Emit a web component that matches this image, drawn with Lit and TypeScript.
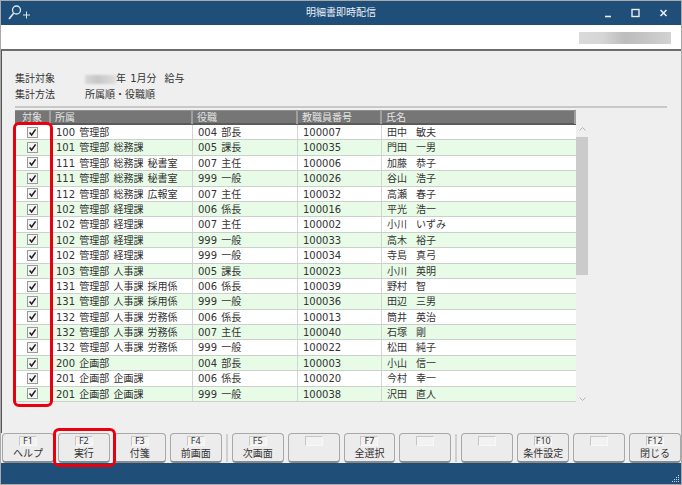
import { LitElement, html, css, nothing } from 'lit';
import { customElement } from 'lit/decorators.js';

const ROWS: string[][] = [
  ['100 管理部', '004 部長', '100007', '田中', '敏夫'],
  ['101 管理部 総務課', '005 課長', '100035', '門田', '一男'],
  ['111 管理部 総務課 秘書室', '007 主任', '100006', '加藤', '恭子'],
  ['111 管理部 総務課 秘書室', '999 一般', '100026', '谷山', '浩子'],
  ['112 管理部 総務課 広報室', '007 主任', '100032', '高瀬', '春子'],
  ['102 管理部 経理課', '006 係長', '100016', '平光', '浩一'],
  ['102 管理部 経理課', '007 主任', '100002', '小川', 'いずみ'],
  ['102 管理部 経理課', '999 一般', '100033', '高木', '裕子'],
  ['102 管理部 経理課', '999 一般', '100034', '寺島', '真弓'],
  ['103 管理部 人事課', '005 課長', '100023', '小川', '英明'],
  ['131 管理部 人事課 採用係', '006 係長', '100039', '野村', '智'],
  ['131 管理部 人事課 採用係', '999 一般', '100036', '田辺', '三男'],
  ['132 管理部 人事課 労務係', '006 係長', '100013', '筒井', '英治'],
  ['132 管理部 人事課 労務係', '007 主任', '100040', '石塚', '剛'],
  ['132 管理部 人事課 労務係', '999 一般', '100022', '松田', '純子'],
  ['200 企画部', '004 部長', '100003', '小山', '信一'],
  ['201 企画部 企画課', '006 係長', '100020', '今村', '幸一'],
  ['201 企画部 企画課', '999 一般', '100038', '沢田', '直人'],
];

// null = separator between button groups
const KEYS: ([string, string] | null)[] = [
  ['F1', 'ヘルプ'],
  ['F2', '実行'],
  ['F3', '付箋'],
  ['F4', '前画面'],
  null,
  ['F5', '次画面'],
  ['', ''],
  ['F7', '全選択'],
  ['', ''],
  null,
  ['', ''],
  ['F10', '条件設定'],
  ['', ''],
  ['F12', '閉じる'],
];

@customElement('app-root')
export class AppRoot extends LitElement {
  static styles = css`
    :host {
      display: block;
      width: 682px;
      height: 485px;
      overflow: hidden;
      background: #fff;
      font-family: 'DejaVu Sans', 'Noto Sans CJK JP', sans-serif;
      font-size: 10px;
      word-spacing: 1px;
      color: #333;
    }
    .window {
      position: relative;
      box-sizing: border-box;
      width: 682px;
      height: 485px;
      border: 1px solid #a9a9a9;
      display: flex;
      flex-direction: column;
    }
    .titlebar {
      height: 24px;
      flex: none;
      background: #1f4e79;
      color: #e8eef4;
      display: grid;
      grid-template-columns: 1fr auto 1fr;
      align-items: center;
    }
    .title {
      font-size: 10px;
      line-height: 14px;
    }
    .logo {
      display: block;
      margin-left: 7px;
    }
    .controls {
      justify-self: end;
      display: flex;
      align-items: center;
      gap: 19px;
      margin-right: 13px;
    }
    .controls svg {
      display: block;
    }
    .toolbar {
      height: 24px;
      flex: none;
      background: #fff;
      display: flex;
      justify-content: flex-end;
      align-items: center;
      padding-right: 10px;
      box-sizing: border-box;
    }
    .blur-box {
      width: 92px;
      height: 12px;
      margin-top: 1px;
      background: linear-gradient(90deg, #dadada 0%, #d6d6d6 25%, #bdbdbd 50%, #c4c4c4 70%, #d2d2d2 100%);
    }
    .content {
      flex: 1;
      min-height: 0;
      box-sizing: border-box;
      background: #efefef;
      border-top: 2px solid #6d6d6d;
      border-left: 1px solid #555;
      padding: 20px 0 0 13px;
      display: flex;
      flex-direction: column;
    }
    .info {
      display: grid;
      grid-template-columns: 70px 1fr;
      grid-auto-rows: 16px;
      line-height: 16px;
      align-items: center;
    }
    .value {
      display: flex;
      align-items: center;
      white-space: pre;
    }
    .smudge {
      width: 31px;
      height: 9px;
      background: linear-gradient(90deg, #d8d8d8, #c6c6c6 40%, #dedede 100%);
      filter: blur(1px);
    }
    .gap {
      display: inline-block;
      width: 8px;
    }
    .rule {
      width: 652px;
      height: 2px;
      margin-top: 3px;
      background: #c8c8c8;
      flex: none;
    }
    .table-wrap {
      margin-top: 2px;
      display: flex;
      align-items: flex-start;
    }
    .table {
      width: 561px;
      flex: none;
    }
    .row {
      display: grid;
      grid-template-columns: 36px 142px 105px 84px 1fr;
      height: 15.4px;
      box-sizing: border-box;
      border-bottom: 1px solid #ccd0cc;
      background: #fff;
      line-height: 15px;
    }
    .row.alt {
      background: #e7fbe7;
    }
    .row .cell {
      border-right: 1px solid #d4d4d4;
      padding-left: 5px;
      white-space: nowrap;
      overflow: hidden;
    }
    .row .cell:last-child {
      border-right: none;
    }
    .row.head {
      height: 15px;
      background: #767676;
      color: #e4e4e4;
      border-top: 1px solid #909090;
      border-bottom: 2px solid #5a5a5a;
      line-height: 13px;
    }
    .row.head .cell {
      border-right: 2px solid #a0a0a0;
      padding-left: 4px;
      overflow: visible;
    }
    .row.head .cell:first-child {
      text-align: center;
      padding-left: 0;
    }
    .cell.check {
      padding-left: 0;
      display: flex;
      align-items: center;
      justify-content: center;
    }
    .box {
      display: block;
    }
    .name {
      display: inline-block;
      width: 29px;
    }
    .scrollbar {
      width: 12px;
      margin-top: 15px;
      height: 278px;
      display: flex;
      flex-direction: column;
      align-items: center;
    }
    .scrollbar svg {
      display: block;
      flex: none;
    }
    .thumb {
      width: 12px;
      height: 138px;
      margin-top: 4px;
      background: #cbcbcb;
    }
    .spacer {
      flex: 1;
    }
    .keys {
      flex: none;
      height: 30px;
      background: #efefef;
      display: flex;
      align-items: stretch;
      gap: 4px;
      padding-left: 1px;
    }
    .key {
      box-sizing: border-box;
      flex: 1 1 0;
      border: 1px solid #a8a8a8;
      border-bottom: 2px solid #8a8a8a;
      border-radius: 4px;
      background: #ececec;
      display: flex;
      flex-direction: column;
      align-items: center;
      padding-top: 2px;
      min-width: 0;
    }
    .fkey {
      width: 18px;
      height: 10px;
      box-sizing: border-box;
      border: 1px solid #c6c6c6;
      border-right-color: #f8f8f8;
      border-bottom-color: #f8f8f8;
      font-family: 'Noto Sans', sans-serif;
      font-size: 9px;
      line-height: 8px;
      text-align: center;
      color: #333;
      background: #f2f2f2;
    }
    .klabel {
      font-size: 10px;
      line-height: 14px;
      margin-top: 1px;
      white-space: nowrap;
    }
    .sep {
      flex: none;
      width: 2px;
      margin: 1px 0;
      background: #cfcfcf;
    }
    .status {
      flex: none;
      height: 21px;
      background: #1f4e79;
      position: relative;
    }
    .grip {
      position: absolute;
      right: 1px;
      bottom: 1px;
      display: block;
    }
    .mark {
      position: absolute;
      box-sizing: border-box;
      border: 3px solid #e8000f;
      border-radius: 6px;
      pointer-events: none;
    }
    .mark.col {
      left: 12px;
      top: 121px;
      width: 40px;
      height: 285px;
    }
    .mark.btn {
      left: 52px;
      top: 427px;
      width: 63px;
      height: 39px;
    }
  `;

  renderCheck() {
    return html`<svg class="box" width="11" height="11" viewBox="0 0 11 11">
      <rect x="0.5" y="0.5" width="10" height="10" fill="#f4f4f4" stroke="#9a9a9a" />
      <path d="M2.6 5.6 L4.6 8 L8.6 2.4" fill="none" stroke="#1c1c1c" stroke-width="1.5" />
    </svg>`;
  }

  renderRow(r: string[], i: number) {
    return html`<div class="row ${i % 2 ? 'alt' : ''}">
      <div class="cell check">${this.renderCheck()}</div>
      <div class="cell">${r[0]}</div>
      <div class="cell">${r[1]}</div>
      <div class="cell">${r[2]}</div>
      <div class="cell"><span class="name">${r[3]}</span>${r[4]}</div>
    </div>`;
  }

  renderKey(k: [string, string] | null) {
    if (!k) return html`<div class="sep"></div>`;
    return html`<div class="key">
      <div class="fkey">${k[0]}</div>
      ${k[1] ? html`<div class="klabel">${k[1]}</div>` : nothing}
    </div>`;
  }

  render() {
    return html`
      <div class="window">
        <div class="titlebar">
          <svg class="logo" width="22" height="18" viewBox="0 0 22 18">
            <circle cx="8.5" cy="6" r="4" fill="none" stroke="#dfe7ee" stroke-width="1.3" />
            <path d="M5.6 9.2 L1 15" stroke="#dfe7ee" stroke-width="1.6" fill="none" />
            <path d="M15 11 H22 M18.5 7.5 V14.5" stroke="#dfe7ee" stroke-width="1" fill="none" />
          </svg>
          <div class="title">明細書即時配信</div>
          <div class="controls">
            <svg width="8" height="10" viewBox="0 0 8 10"><path d="M1 8.5 H7" stroke="#e8eef4" stroke-width="1.6" /></svg>
            <svg width="9" height="10" viewBox="0 0 9 10">
              <rect x="1" y="1.5" width="7" height="7" fill="none" stroke="#e8eef4" stroke-width="1.4" />
            </svg>
            <svg width="9" height="10" viewBox="0 0 9 10"><path d="M1.5 2 L7.5 8 M7.5 2 L1.5 8" stroke="#e8eef4" stroke-width="1.6" /></svg>
          </div>
        </div>
        <div class="toolbar"><div class="blur-box"></div></div>
        <div class="content">
          <div class="info">
            <div>集計対象</div>
            <div class="value"><span class="smudge"></span>年 1月分<span class="gap"></span>給与</div>
            <div>集計方法</div>
            <div>所属順・役職順</div>
          </div>
          <div class="rule"></div>
          <div class="table-wrap">
            <div class="table">
              <div class="row head">
                <div class="cell">対象</div>
                <div class="cell">所属</div>
                <div class="cell">役職</div>
                <div class="cell">教職員番号</div>
                <div class="cell">氏名</div>
              </div>
              ${ROWS.map((r, i) => this.renderRow(r, i))}
            </div>
            <div class="scrollbar">
              <svg width="9" height="8" viewBox="0 0 9 8"><path d="M1.5 5.5 L4.5 2.5 L7.5 5.5" fill="none" stroke="#b5b5b5" /></svg>
              <div class="thumb"></div>
              <div class="spacer"></div>
              <svg width="9" height="8" viewBox="0 0 9 8"><path d="M1.5 2.5 L4.5 5.5 L7.5 2.5" fill="none" stroke="#b5b5b5" /></svg>
            </div>
          </div>
          <div class="spacer"></div>
        </div>
        <div class="keys">${KEYS.map((k) => this.renderKey(k))}</div>
        <div class="status">
          <svg class="grip" width="8" height="8" viewBox="0 0 8 8" fill="#c9d4de">
            <rect x="6" y="0" width="1" height="1" />
            <rect x="4" y="2" width="1" height="1" /><rect x="6" y="2" width="1" height="1" />
            <rect x="2" y="4" width="1" height="1" /><rect x="4" y="4" width="1" height="1" /><rect x="6" y="4" width="1" height="1" />
            <rect x="0" y="6" width="1" height="1" /><rect x="2" y="6" width="1" height="1" /><rect x="4" y="6" width="1" height="1" /><rect x="6" y="6" width="1" height="1" />
          </svg>
        </div>
        <div class="mark col"></div>
        <div class="mark btn"></div>
      </div>
    `;
  }
}
